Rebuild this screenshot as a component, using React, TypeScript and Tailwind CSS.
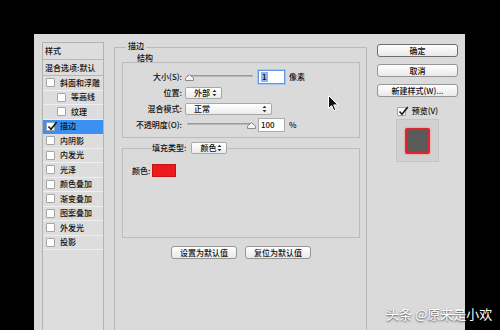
import React from "react";

const Check = () => (
  <svg width="11" height="10" viewBox="0 0 11 10" className="absolute left-[0px] top-[-2px]">
    <path d="M1.5 5.5 L4 8.2 L9.8 1" fill="none" stroke="#1a1a1a" strokeWidth="1.6" />
  </svg>
);

const Box = ({ checked = false }: { checked?: boolean }) => (
  <span className="relative inline-block w-[9px] h-[9px] shrink-0 border border-[#a4a4a4] bg-white rounded-[1px]">
    {checked && <Check />}
  </span>
);

const Arrows = () => (
  <svg width="5" height="8" viewBox="0 0 5 8">
    <path d="M0.5 3 L2.5 0.8 L4.5 3 Z M0.5 5 L2.5 7.2 L4.5 5 Z" fill="#333" />
  </svg>
);

const Select = ({ w, text }: { w: string; text: string }) => (
  <div
    className={`${w} h-[12px] border border-[#a9a9a9] rounded-[2px] bg-gradient-to-b from-white to-[#ececec] flex items-center justify-between pl-[8px] pr-[4px] leading-[10px]`}
  >
    <span>{text}</span>
    <Arrows />
  </div>
);

const Slider = ({ thumb }: { thumb: number }) => (
  <div className="relative w-[70px] h-[14px] shrink-0">
    <div className="absolute left-[2px] right-[2px] top-[5px] h-[2px] bg-gradient-to-b from-[#8a8a8a] to-[#c8c8c8] rounded-full" />
    <svg width="9" height="7" viewBox="0 0 9 7" className="absolute top-[4px]" style={{ left: thumb }}>
      <path d="M0.5 6.5 L0.5 4 L4.5 0.7 L8.5 4 L8.5 6.5 Z" fill="#f4f4f4" stroke="#8a8a8a" strokeWidth="1" />
    </svg>
  </div>
);

const Btn = ({ children, strong = false, cls = "" }: { children: React.ReactNode; strong?: boolean; cls?: string }) => (
  <div
    className={`${cls} h-[13px] rounded-[3px] border ${strong ? "border-[#6e6e6e]" : "border-[#959595]"} bg-gradient-to-b from-white to-[#e9e9e9] flex items-center justify-center leading-[10px]`}
  >
    {children}
  </div>
);

const items: { t: string; nested?: boolean; sel?: boolean }[] = [
  { t: "斜面和浮雕" },
  { t: "等高线", nested: true },
  { t: "纹理", nested: true },
  { t: "描边", sel: true },
  { t: "内阴影" },
  { t: "内发光" },
  { t: "光泽" },
  { t: "颜色叠加" },
  { t: "渐变叠加" },
  { t: "图案叠加" },
  { t: "外发光" },
  { t: "投影" },
];

export default function App() {
  return (
    <div className="relative w-[500px] h-[330px] overflow-hidden bg-black pl-[34px] pt-[34px] flex text-[8px] font-medium text-[#101010] font-['Noto_Sans_CJK_SC','Noto_Sans',sans-serif]">
      <div className="w-[431px] h-[296px] bg-[#dadada] flex pl-[8px] pr-[7px] pt-[7px] gap-[10px]">
        {/* Left style list */}
        <div className="w-[62px] mt-[1px] self-stretch border-l border-r border-t border-[#b2b2b2] bg-[#dddddd] flex flex-col">
          <div className="h-[17px] shrink-0 border-b border-[#b6b6b6] pl-[2px] flex items-center">样式</div>
          <div className="h-[16px] shrink-0 border-b border-[#b6b6b6] pl-[2px] flex items-center whitespace-nowrap">混合选项:默认</div>
          {items.map((it) => (
            <div
              key={it.t}
              className={`h-[14.5px] shrink-0 border-b flex items-center gap-[5px] ${
                it.sel ? "bg-[#3c90f2] border-[#3c90f2]" : "border-[#efefef]"
              } ${it.nested ? "pl-[14px]" : "pl-[3px]"}`}
            >
              <Box checked={!!it.sel} />
              <span>{it.t}</span>
            </div>
          ))}
        </div>

        {/* Middle panel */}
        <fieldset className="w-[253px] self-stretch border border-b-0 border-[#b9b9b9] pl-[7px] pr-[6px] min-w-0">
          <legend className="ml-[4px] px-[2px] h-[12px] leading-[9px]">描边</legend>
          <div className="h-[9px] leading-[9px] pl-[15px]">结构</div>
          <div className="h-[76px] border border-[#bcbcbc] pt-[7px] flex flex-col gap-[2px]">
            <div className="h-[14px] flex items-center">
              <span className="w-[60px] text-right pr-[1px]">大小(S):</span>
              <span className="w-[2px]" />
              <Slider thumb={0} />
              <div className="ml-[3px] w-[27px] h-[14px] bg-white border border-[#5d97e3] shadow-[0_0_0_1px_#a9c8f0] flex items-center pl-[2px]">
                <span className="bg-[#8fb5ea] leading-[10px] px-[1px]">1</span>
              </div>
              <span className="ml-[4px]">像素</span>
            </div>
            <div className="h-[14px] flex items-center">
              <span className="w-[60px] text-right pr-[1px]">位置:</span>
              <span className="w-[2px]" />
              <Select w="w-[37px]" text="外部" />
            </div>
            <div className="h-[14px] flex items-center">
              <span className="w-[60px] text-right pr-[1px]">混合模式:</span>
              <span className="w-[2px]" />
              <Select w="w-[87px]" text="正常" />
            </div>
            <div className="h-[14px] flex items-center">
              <span className="w-[60px] text-right pr-[1px] whitespace-nowrap">不透明度(O):</span>
              <span className="w-[2px]" />
              <Slider thumb={62} />
              <div className="ml-[3px] w-[27px] h-[14px] bg-white border border-[#ababab] flex items-center pl-[2px] leading-[10px]">
                100
              </div>
              <span className="ml-[4px]">%</span>
            </div>
          </div>

          <fieldset className="mt-[4px] border border-[#bcbcbc] min-w-0">
            <legend className="ml-[29px] px-0 h-[12px]">
              <div className="flex items-center gap-[5px] h-[12px]">
                <span>填充类型:</span>
                <Select w="w-[36px]" text="颜色" />
              </div>
            </legend>
            <div className="h-[83px] pt-[10px] pl-[9px]">
              <div className="flex items-center gap-[2px]">
                <span>颜色:</span>
                <div className="w-[24px] h-[13px] bg-[#ec1a1c] border border-[#c41214]" />
              </div>
            </div>
          </fieldset>

          <div className="mt-[8px] flex justify-center gap-[8px]">
            <Btn cls="w-[66px] h-[12px]">设置为默认值</Btn>
            <Btn cls="w-[66px] h-[12px]">复位为默认值</Btn>
          </div>
        </fieldset>

        {/* Right column */}
        <div className="w-[81px] pt-[3px] flex flex-col items-stretch">
          <Btn strong cls="w-full">确定</Btn>
          <Btn cls="w-full mt-[7px]">取消</Btn>
          <Btn cls="w-full mt-[7px]">新建样式(W)...</Btn>
          <div className="mt-[8px] h-[12px] flex items-center justify-center gap-[6px]">
            <Box checked />
            <span>预览(V)</span>
          </div>
          <div className="mt-[2px] self-center w-[43px] h-[43px] bg-[#d1d1d1] border border-[#c4c4c4] flex items-center justify-center">
            <div className="w-[25px] h-[26px] bg-[#5a5a5a] border-2 border-[#e0262b] rounded-[2px] shadow-[0_0_2px_#ff7070]" />
          </div>
        </div>
      </div>

      {/* mouse cursor */}
      <svg width="11" height="17" viewBox="0 0 11 17" className="absolute left-[328px] top-[95px]">
        <path d="M0.5 0.5 L0.5 13.5 L3.6 10.6 L5.8 15.6 L7.8 14.7 L5.7 9.9 L9.9 9.9 Z" fill="#111" stroke="#fff" strokeWidth="1" />
      </svg>

      {/* watermark */}
      <div className="absolute left-[386px] top-[306px] text-[13px] leading-[16px] font-normal text-white [text-shadow:0_1px_2px_rgba(0,0,0,0.7)] whitespace-nowrap">
        头条 @原来是小欢
      </div>
    </div>
  );
}
